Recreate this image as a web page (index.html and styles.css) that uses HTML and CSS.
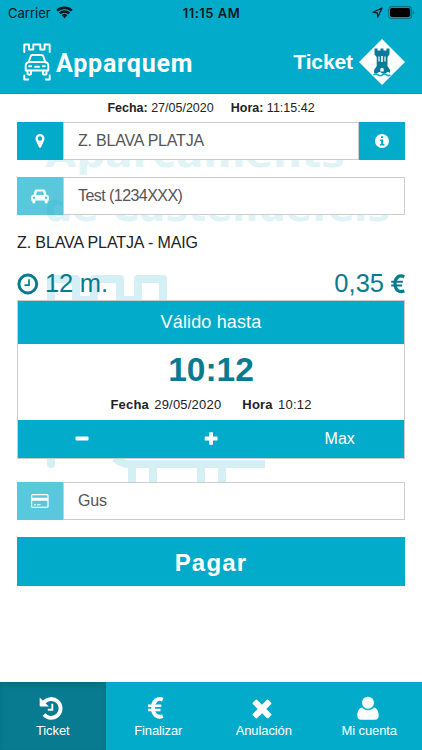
FILE: index.html
```html
<!DOCTYPE html>
<html lang="es">
<head>
<meta charset="utf-8">
<title>Apparquem</title>
<link rel="stylesheet" href="styles.css">
</head>
<body>
<div class="app">
  <header class="header">
    <div class="status">
      <div class="carrier"><span>Carrier</span>
        <svg width="17" height="13" viewBox="0 0 17 13"><path d="M1.2 4.6a10.5 10.5 0 0 1 14.6 0M3.8 7.4a6.8 6.8 0 0 1 9.4 0" fill="none" stroke="#05181c" stroke-width="2.5"/><path d="M5.6 9.2a4.2 4.2 0 0 1 5.8 0L8.5 12.3z" fill="#05181c"/></svg>
      </div>
      <div class="clock">11:15 AM</div>
      <div class="battery">
        <svg width="11" height="11" viewBox="0 0 11 11"><path d="M10 1 1 5.3l4.3.5.5 4.3z" fill="none" stroke="#05181c" stroke-width="1.2" stroke-linejoin="round"/></svg>
        <svg width="27" height="13" viewBox="0 0 27 13"><rect x=".6" y=".6" width="23" height="11.8" rx="3.2" fill="none" stroke="#077085" stroke-width="1.1"/><rect x="2" y="2" width="20.2" height="9" rx="1.8"/><path d="M25 4.6c1.8.5 1.8 3.300 0 3.800z" fill="#077085"/></svg>
      </div>
    </div>
    <div class="brandbar">
      <div class="brand">
        <svg width="28" height="38" viewBox="0 0 28 38" fill="none" stroke="#fff" stroke-width="1.900" stroke-linecap="round" stroke-linejoin="round"><path d="M1.300 9V1.500h4.700v5h4.300V1.500h7v5h4.300V1.500h5.100V9M1.300 32.500v4h4M26.700 32.500v4h-4M5.800 18.800l1.900-5.500q.4-1.300 1.700-1.300h9.200q1.300 0 1.700 1.300l1.900 5.500M5.500 19h17q2.800 1 2.800 3.500V27.500H2.700v-5Q2.700 20 5.500 19zM4.500 28v3q1.800 1.500 3.500 0v-3M20 28v3q1.700 1.500 3.500 0v-3M6.200 23.300h2M19.800 23.300h2M12 23.800h4"/></svg>
        <span>Apparquem</span>
      </div>
      <div class="page"><span>Ticket</span>
        <svg width="46" height="46" viewBox="0 0 46 46"><path d="M23 0 46 23 23 46 0 23z" fill="#fff"/><path d="M15.500 9.500h3v2h3v-2h3v2h3v-2h3v6l-2 2.500v9l2.500 4v3q-2-1.800-4 0-2 1.500-4.300 0-2-1.800-4.200 0-2 1-3.400 0v-3l2.600-4v-9l-2.200-2.500z" fill="#087b98"/><path d="M20 17.500v5M26 17.500v5" stroke="#fff" stroke-width="1.200" fill="none"/><path d="M22.200 17h1.600v6h-1.600zM21.300 32.500v-2.800q1.700-1.800 3.400 0v2.800z" fill="#fff"/><path d="M14.500 35.800q2.200-1.700 4.400 0t4.400 0 4.400 0 3.800 0" fill="none" stroke="#02abca" stroke-width="1.500"/></svg>
      </div>
    </div>
  </header>

  <main class="main">
    <div class="watermark">
      <svg class="wm-art" width="422" height="588" viewBox="0 0 422 588">
        <g class="wm-text">
          <text x="45" y="73" font-size="38" textLength="300" lengthAdjust="spacingAndGlyphs">Aparcaments</text>
          <text x="45" y="127" font-size="38" textLength="345" lengthAdjust="spacingAndGlyphs">de Castelldefels</text>
        </g>
        <g fill="none" stroke="#d5f0f5" stroke-width="8">
          <path d="M51 235v-50h25v21h18v-21h26v21h18v-21h25v50" stroke-linejoin="round"/>
          <path d="M115 364q6 6 14 6h136M132 370v36M153 370v36M201 370v36M222 370v36"/>
          <path d="M51 340v30" stroke-linecap="round"/>
        </g>
      </svg>
    </div>
    <div class="dateline"><span><b>Fecha:</b> 27/05/2020</span><span><b>Hora:</b> 11:15:42</span></div>

    <div class="field">
      <div class="addon"><svg width="10" height="14" viewBox="0 0 10 14"><path fill-rule="evenodd" d="M5 0a4.500 4.500 0 0 1 4.500 4.500c0 1.100-.3 1.700-.6 2.400L6 13.200q-1 1.300-2 0L1.100 6.900C.8 6.200.5 5.600.5 4.500A4.500 4.500 0 0 1 5 0zm0 2.300a2.200 2.200 0 1 0 0 4.400 2.200 2.200 0 0 0 0-4.400z" fill="#fff"/></svg></div>
      <div class="value">Z. BLAVA PLATJA</div>
      <div class="addon"><svg width="14" height="14" viewBox="0 0 14 14"><circle cx="7" cy="7" r="7" fill="#fff"/><path d="M6 2.300h2.200v1.800H6zM5 5.400h3.200v4.700H9.400v1.500H4.900v-1.500h1.200V6.900H5z" fill="#02abca"/></svg></div>
    </div>

    <div class="field">
      <div class="addon light"><svg width="18" height="15" viewBox="0 0 18 15"><path fill-rule="evenodd" d="M5.500.5h7q1.500 0 1.900 1.400L15.500 6h.5q2 0 2 2v3.500h-1.300V13q0 1.500-1.500 1.500T13.700 13v-1.500H4.300V13q0 1.500-1.500 1.500T1.300 13v-1.500H0V8q0-2 2-2h.5l1.100-4.100Q4 .5 5.500.5zM5.900 2.500 5 6h8l-.9-3.500zM3 7.500a1.300 1.300 0 1 0 0 2.600 1.300 1.300 0 0 0 0-2.600zm12 0a1.300 1.300 0 1 0 0 2.600 1.300 1.300 0 0 0 0-2.600z" fill="#fff"/></svg></div>
      <div class="value plate">Test (1234XXX)</div>
    </div>

    <div class="zone">Z. BLAVA PLATJA - MAIG</div>

    <div class="summary">
      <div class="duration"><svg width="22" height="22" viewBox="0 0 22 22" fill="none" stroke="#087b91"><circle cx="10.800" cy="11" r="8.900" stroke-width="3"/><path d="M12 6.200v5.900H7.500" stroke-width="1.700"/></svg><span>12 m.</span></div>
      <div class="price"><span>0,35</span><svg width="14" height="20" viewBox="0 0 14 20" fill="none" stroke="#087b91"><path d="M13.300 2.800C8 .4 4 3.700 4 9.800s4 9.400 9.300 7" stroke-width="3.200"/><path d="M.2 7.700h11.700M.2 11.500h10.900" stroke-width="2"/></svg></div>
    </div>

    <section class="panel">
      <div class="panel-head">Válido hasta</div>
      <div class="panel-body">
        <div class="bigtime">10:12</div>
        <div class="until"><span><b>Fecha</b> 29/05/2020</span><span><b>Hora</b> 10:12</span></div>
      </div>
      <div class="panel-foot">
        <div><svg width="14" height="14" viewBox="0 0 14 14"><rect x=".5" y="4.500" width="13" height="4" rx=".8" fill="#fff"/></svg></div>
        <div><svg width="14" height="14" viewBox="0 0 14 14"><path d="M1.300 4.500h3.900V.8q0-.6.6-.6h2.600q.6 0 .6.600v3.700h3.900q.6 0 .6.600v2.800q0 .6-.6.600H9v3.700q0 .6-.6.600H5.800q-.6 0-.6-.6V8.500H1.300q-.6 0-.6-.6V5.100q0-.6.6-.6z" fill="#fff"/></svg></div>
        <div>Max</div>
      </div>
    </section>

    <div class="field card">
      <div class="addon light"><svg width="18" height="14" viewBox="0 0 18 14"><rect x=".6" y=".6" width="16.400" height="12.800" rx="1" fill="none" stroke="#fff" stroke-width="1.200"/><path d="M1 3.800h16v3H1zM3 10.300h2v1H3zm3 0h3.500v1H6z" fill="#fff"/></svg></div>
      <div class="value">Gus</div>
    </div>
    <div class="pay">Pagar</div>
  </main>

  <nav class="tabs">
    <div class="tab active"><svg class="history" width="24" height="24" viewBox="0 0 24 24"><path d="M4.800 6.600A9.400 9.400 0 1 1 5 18.500" fill="none" stroke="#fff" stroke-width="3.800"/><path d="M.7 1.500v8.300q0 .8.800.8h8.400z" fill="#fff"/><path d="M13.300 7.800v6H8.800" fill="none" stroke="#fff" stroke-width="1.900"/></svg><span>Ticket</span></div>
    <div class="tab"><svg width="24" height="24" viewBox="0 0 24 24" fill="none" stroke="#fff"><path d="M16.800 3.600C11.500 1.300 7 4.800 7 12s4.500 10.300 9.800 8" stroke-width="3.900"/><path d="M2 9.800h13.300M2 14h12.500" stroke-width="2.400"/></svg><span>Finalizar</span></div>
    <div class="tab"><svg class="cross" width="24" height="24" viewBox="0 0 24 24" fill="#fff"><g transform="rotate(45 12 13)"><rect x="1" y="10" width="22" height="6" rx="1.300"/><rect x="9" y="2" width="6" height="22" rx="1.300"/></g></svg><span>Anulación</span></div>
    <div class="tab user"><svg width="24" height="24" viewBox="0 0 24 24" fill="#fff"><path d="M6.200 11.500C2.800 12 1.300 15.500 1.300 19.800q0 4 4 4h13.400q4 0 4-4c0-4.300-1.500-7.800-4.900-8.300Q12 16 6.200 11.500z"/><circle cx="12" cy="6.700" r="6"/><path d="M6.200 11.600q5.800 4.700 11.600 0" fill="none" stroke="#02abca" stroke-width=".8"/></svg><span>Mi cuenta</span></div>
  </nav>
</div>
</body>
</html>
```

FILE: styles.css
```css
* { box-sizing: border-box; }
body {
  margin: 0;
  font-family: "Liberation Sans", Arial, sans-serif;
  color: #222;
  background: #fff;
}
svg { display: block; flex: none; }
.app { width: 422px; height: 750px; display: flex; flex-direction: column; overflow: hidden; }

.header { height: 94px; background: #02abca; border-bottom: 1px solid #1793ad; flex: none; }
.status {
  height: 24px;
  display: grid;
  grid-template-columns: 1fr auto 1fr;
  align-items: center;
  padding: 1px 7px 0 8px;
  font-family: Inter, sans-serif;
  font-size: 13px;
  color: #05181c;
}
.carrier { display: flex; align-items: center; gap: 5px; }
.clock { font-weight: 600; letter-spacing: .5px; }
.battery { display: flex; align-items: center; justify-content: flex-end; gap: 5px; }
.brandbar { display: flex; justify-content: space-between; align-items: center; height: 76px; padding: 0 17px 0 23px; color: #fff; font-weight: bold; }
.brand { display: flex; align-items: center; gap: 5px; font-family: Roboto, sans-serif; font-size: 25px; letter-spacing: .8px; }
.brand span { padding-top: 2px; }
.page { display: flex; align-items: center; gap: 6px; font-size: 21px; letter-spacing: -.1px; }

.main { position: relative; flex: 1; padding: 0 17px; isolation: isolate; }
.watermark { position: absolute; inset: 0; z-index: -1; overflow: hidden; }
.wm-text { fill: #e0f4f7; font-family: "DejaVu Sans", sans-serif; font-weight: bold; }

.dateline { height: 27px; display: flex; justify-content: center; align-items: center; gap: 17px; font-size: 12.5px; margin-bottom: 1px; }
.field { display: flex; height: 38px; margin-bottom: 17px; }
.addon { width: 46px; flex: none; background: #02abca; display: flex; align-items: center; justify-content: center; }
.addon.light { background: rgba(2, 171, 202, .65); }
.value { flex: 1; border: 1px solid #ccc; background: #fff; padding-left: 14px; line-height: 36px; font-size: 16px; letter-spacing: -.2px; color: #555; }
.value.plate { letter-spacing: -.55px; }
.zone { height: 52px; margin-top: -17px; padding-top: 2px; line-height: 52px; font-size: 16px; letter-spacing: -.1px; }
.summary { display: flex; justify-content: space-between; height: 33px; align-items: center; color: #087b91; font-size: 25.5px; }
.duration, .price { display: flex; align-items: center; }
.duration { gap: 6px; letter-spacing: -.2px; }
.duration span, .price span { margin-top: -1px; }
.price { gap: 7px; }

.panel { height: 159px; border: 1px solid #ccc; background: #fff; }
.panel-head { height: 43px; line-height: 42px; background: #02abca; color: #fff; text-align: center; font-size: 18px; letter-spacing: .15px; }
.panel-body { height: 76px; text-align: center; }
.bigtime { height: 48px; line-height: 51px; font-size: 33.5px; font-weight: bold; color: #087b91; }
.until { display: flex; justify-content: center; gap: 21px; font-size: 13px; letter-spacing: .2px; word-spacing: 1.5px; line-height: 25px; }
.panel-foot { display: grid; grid-template-columns: repeat(3, 1fr); height: 38px; background: #02abca; color: #fff; font-size: 16px; }
.panel-foot div { display: flex; align-items: center; justify-content: center; }
.card { margin: 23px 0 17px; }
.pay { height: 49px; line-height: 51px; background: #02abca; color: #fff; font-size: 24px; font-weight: bold; letter-spacing: 1.2px; text-align: center; }

.tabs { display: grid; grid-template-columns: repeat(4, 1fr); height: 68px; flex: none; background: #02abca; color: #fff; }
.tab { display: flex; flex-direction: column; align-items: center; padding-top: 14px; gap: 3px; font-size: 13px; letter-spacing: -.1px; line-height: 15px; }
.tab.active { background: #087b91; box-shadow: inset 0 3px 5px rgba(0, 0, 0, .125); }
.history { margin-left: -3px; }
.cross { margin-left: -4px; }
.user svg { margin-left: -3px; }
```
